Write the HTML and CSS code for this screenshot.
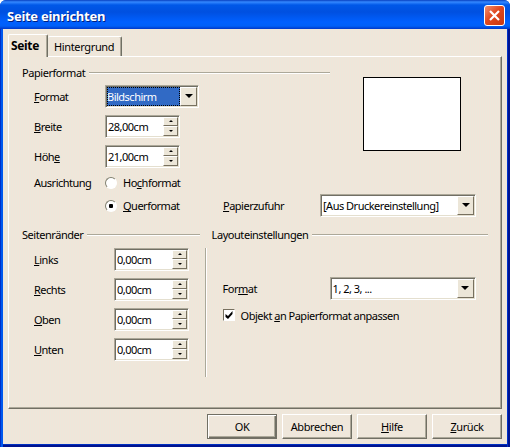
FILE: index.html
```html
<!DOCTYPE html>
<html lang="de">
<head>
<meta charset="utf-8">
<title>Seite einrichten</title>
<link rel="stylesheet" href="styles.css">
</head>
<body>
<div class="window">
  <header class="titlebar">
    <h1>Seite einrichten</h1>
    <button class="close" aria-label="Schließen"><svg width="21" height="21" viewBox="0 0 21 21"><path d="M6 6 15 15M15 6 6 15" stroke="#fff" stroke-width="2.2" fill="none"/></svg></button>
  </header>
  <main class="client">
    <nav class="tabs">
      <div class="tab active">Seite</div>
      <div class="tab">Hintergrund</div>
    </nav>
    <section class="panel">
      <div class="upper">
        <div class="paper">
          <div class="legend"><span>Papierformat</span><i></i></div>
          <div class="row"><label><u>F</u>ormat</label><div class="field combo focused"><span>Bildschirm</span><b class="drop"></b></div></div>
          <div class="row"><label><u>B</u>reite</label><div class="field spin"><span>28,00cm</span><b class="steps"><i class="up"></i><i class="down"></i></b></div></div>
          <div class="row"><label>Höh<u>e</u></label><div class="field spin"><span>21,00cm</span><b class="steps"><i class="up"></i><i class="down"></i></b></div></div>
          <div class="row radio-row"><label>Ausrichtung</label><b class="radio"></b><span>Ho<u>c</u>hformat</span></div>
        </div>
        <div class="preview"></div>
      </div>
      <div class="row feed-row"><label></label><b class="radio on"></b><span class="quer"><u>Q</u>uerformat</span><span class="feed-label"><u>P</u>apierzufuhr</span><div class="field combo feed"><span>[Aus Druckereinstellung]</span><b class="drop"></b></div></div>
      <div class="lower">
        <div class="margins">
          <div class="legend"><span>Seitenränder</span><i></i></div>
          <div class="row"><label><u>L</u>inks</label><div class="field spin"><span>0,00cm</span><b class="steps"><i class="up"></i><i class="down"></i></b></div></div>
          <div class="row"><label><u>R</u>echts</label><div class="field spin"><span>0,00cm</span><b class="steps"><i class="up"></i><i class="down"></i></b></div></div>
          <div class="row"><label><u>O</u>ben</label><div class="field spin"><span>0,00cm</span><b class="steps"><i class="up"></i><i class="down"></i></b></div></div>
          <div class="row"><label><u>U</u>nten</label><div class="field spin"><span>0,00cm</span><b class="steps"><i class="up"></i><i class="down"></i></b></div></div>
        </div>
        <div class="divider"></div>
        <div class="layout">
          <div class="legend"><span>Layouteinstellungen</span><i></i></div>
          <div class="row numbering"><label>For<u>m</u>at</label><div class="field combo"><span>1, 2, 3, ...</span><b class="drop"></b></div></div>
          <div class="check-row"><b class="check"><svg width="8" height="8" viewBox="0 0 8 8"><path d="M.5 3v3L3 8 7.500 3V0L3 5Z"/></svg></b><span>Objekt <u>a</u>n Papierformat anpassen</span></div>
        </div>
      </div>
    </section>
    <footer class="buttons">
      <button class="btn default">OK</button>
      <button class="btn">Abbrechen</button>
      <button class="btn"><u>H</u>ilfe</button>
      <button class="btn"><u>Z</u>urück</button>
    </footer>
  </main>
</div>
</body>
</html>
```
FILE: styles.css
```css
* { box-sizing: border-box; }
body {
  margin: 0;
  background: #fff;
  color: #000;
  font: 11px/14px "Noto Sans", "Open Sans", sans-serif;
  letter-spacing: -0.5px;
  white-space: nowrap;
}
button { font: inherit; letter-spacing: inherit; color: inherit; padding: 0; }
u { text-decoration: underline; text-underline-offset: 1px; text-decoration-thickness: 1px; text-decoration-skip-ink: none; }
.window {
  width: 510px;
  height: 447px;
  padding: 0 3px 3px;
  border-radius: 6px 6px 0 0;
  background: linear-gradient(90deg, #0030c8 0 1px, #0058ee 1px 3px, transparent 3px 507px, #0030c8 507px 508px, #001490 508px),
    linear-gradient(#0058e0 444px, #0030c0 444px 445px, #001490 445px);
}
.titlebar {
  display: flex;
  justify-content: space-between;
  height: 29px;
  margin: 0 -3px;
  padding: 5px 5px 0 7px;
  border-radius: 6px 6px 0 0;
  background: linear-gradient(#0840c0 0, #3488ff 2px, #0058e8 5px, #0050e0 12px, #0060ff 22px, #0060f8 26px, #0038c8 29px);
}
h1 { margin: 2px 0 0; font-size: 13px; line-height: 18px; letter-spacing: -0.27px; color: #fff; text-shadow: 1px 1px #002080; }
.close { width: 21px; height: 21px; border: 1px solid #fff; border-radius: 3px; background: linear-gradient(135deg, #f09070, #e04820 45%, #c83810); }
.close svg { display: block; margin: -1px; }
.client {
  height: 415px;
  padding: 5px 5px 0;
  background: repeating-linear-gradient(90deg, #f1e5d9 0 1px, #ece8db 1px 2px);
}
.tabs { display: flex; align-items: flex-end; height: 22px; }
.tab { height: 20px; width: 74px; padding: 3px 0 0 6px; letter-spacing: -0.35px; border-top: 1px solid #fff; border-right: 1px solid #716f64; border-radius: 2px 2px 0 0; box-shadow: inset -1px 0 #aca899; }
.tab.active { width: 40px; height: 23px; margin-bottom: -1px; padding: 4px 0 0 2px; border-left: 1px solid #fff; font-weight: bold; font-size: 12px; background: #efe6d9; }
.panel {
  height: 353px;
  padding: 9px 13px 1px 13px;
  border: solid;
  border-width: 1px;
  border-color: #fff #716f64 #716f64 #fff;
  box-shadow: inset -1px -1px #aca899;
}
.upper { display: flex; justify-content: space-between; height: 128px; }
.paper { width: 308px; }
.preview { width: 98px; height: 74px; margin: 11px 27px 0 0; border: 1px solid #000; background: #fff; }
.legend { display: flex; align-items: center; gap: 4px; height: 14px; letter-spacing: -0.45px; }
.legend i { flex: 1; height: 2px; border-top: 1px solid #aca899; border-bottom: 1px solid #fff; }
.row { display: flex; align-items: center; height: 30px; padding-left: 12px; }
.row label { width: 71px; }
.paper .legend + .row { margin-top: 2px; }
.radio-row { height: 22px; }
.radio { width: 12px; height: 12px; margin-right: 6px; border: 1px solid; border-color: #808070 #fff #fff #808070; border-radius: 50%; background: #fff; }
.radio.on { background: radial-gradient(circle, #000 0 2px, #fff 2.500px); }
.field {
  display: flex;
  height: 23px;
  margin-top: -2px;
  padding: 1px;
  border: 1px solid;
  border-color: #aca899 #fff #fff #aca899;
  background: #fff;
  box-shadow: inset 1px 1px #716f64, inset -1px -1px #e4dfcf;
}
.field > span { flex: 1; padding: 3px 0 0 1px; }
.combo { width: 94px; }
.spin { width: 75px; }
.drop, .steps i { background: #ece6d8; border: 1px solid; border-color: #fff #77705f #77705f #fff; }
.drop { display: grid; place-items: center; width: 17px; }
.drop::after { content: ""; border: 4px solid transparent; border-top-color: #000; border-bottom: 0; }
.field.focused > span { background: #316ac5; color: #fff; outline: 1px dotted #000; outline-offset: -1px; padding-left: 0; }
.steps { width: 15px; display: grid; grid-template-rows: 1fr 1fr; }
.steps i { display: grid; place-items: center; }
.steps i::after { content: ""; border: 2px solid transparent; }
.steps .up::after { border-bottom-color: #000; border-top: 0; }
.steps .down::after { border-top-color: #000; border-bottom: 0; }
.feed-row { height: 24px; }
.quer { width: 100px; }
.feed-label { width: 97px; }
.feed { width: 156px; }
.lower { display: flex; margin-top: 10px; }
.margins { width: 178px; }
.margins .row label { width: 80px; }
.margins .legend { margin-bottom: 3px; }
.divider { width: 2px; height: 129px; margin: 20px 5px 0; border-left: 1px solid #aca899; border-right: 1px solid #fff; }
.layout { width: 277px; }
.numbering { height: 24px; margin-top: 35px; padding-left: 11px; }
.numbering label { width: 107px; }
.numbering .combo { width: 146px; }
.check-row { display: flex; align-items: center; gap: 6px; height: 28px; padding-left: 11px; }
.check-row span { padding-top: 2px; }
.check { display: grid; place-items: center; width: 12px; height: 12px; border: 1px solid; border-color: #77705f #fff #fff #77705f; background: #fff; }
.buttons { display: flex; justify-content: flex-end; gap: 5px; padding-top: 5px; }
.btn { width: 70px; height: 25px; letter-spacing: -0.4px; border: 1px solid; border-color: #fff #716f64 #716f64 #fff; background: #efe7db; box-shadow: inset -1px -1px #aca899; }
.btn.default { border-color: #716f64; box-shadow: inset 1px 1px #fff, inset -1px -1px #716f64, inset -2px -2px #aca899; }
```
